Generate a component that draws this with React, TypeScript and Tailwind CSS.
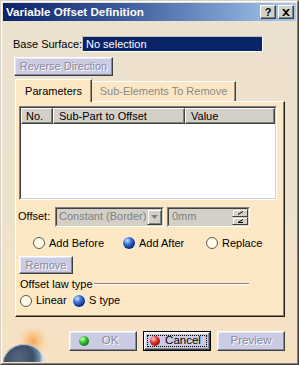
import React from "react";

const btn =
  "flex items-center justify-center bg-[#cbcbe3] border border-t-white border-l-white border-r-[#404040] border-b-[#404040] shadow-[inset_-1px_-1px_0_#8888a0,inset_1px_1px_0_#e6e6f6]";
const disabledText = "text-[#8a8a9e] [text-shadow:1px_1px_0_#ffffff]";

function Radio({ checked, label }: { checked?: boolean; label: string }) {
  return (
    <div className="flex items-center">
      {checked ? (
        <div className="w-[12px] h-[12px] rounded-full bg-[radial-gradient(circle_at_35%_30%,#c8e0ff_0%,#3a70d8_35%,#0c2478_75%,#061040_100%)] shadow-[0_0_0_1px_#f8efe0]" />
      ) : (
        <div className="w-[12px] h-[12px] rounded-full bg-[#fffbe4] border border-[#5a5a5a]" />
      )}
      <span className="ml-[4px] leading-none whitespace-nowrap">{label}</span>
    </div>
  );
}

export default function App() {
  return (
    <div className="w-[299px] h-[365px] overflow-hidden border border-t-[#d4d0c8] border-l-[#d4d0c8] border-r-[#404040] border-b-[#404040] font-['Liberation_Sans',Arial,sans-serif] text-[11px] text-black">
      <div className="w-full h-full border border-t-white border-l-white border-r-[#808080] border-b-[#808080] p-px flex flex-col bg-[linear-gradient(180deg,#ece1cf_0%,#efe2cc_60%,#f7e2c2_100%)]">
        {/* Title bar */}
        <div className="h-[18px] shrink-0 flex items-center bg-[linear-gradient(90deg,#0a246a_0%,#3a5a9a_40%,#a6caf0_100%)] pl-[3px] pr-[2px]">
          <span className="text-white font-bold text-[11.6px] leading-none whitespace-nowrap">Variable Offset Definition</span>
          <div className="ml-auto flex gap-[2px]">
            <div className="w-[16px] h-[14px] bg-[#d4d0c8] border border-t-white border-l-white border-r-[#404040] border-b-[#404040] shadow-[inset_-1px_-1px_0_#808080] flex items-center justify-center font-bold text-[11px] leading-none">?</div>
            <div className="w-[16px] h-[14px] bg-[#d4d0c8] border border-t-white border-l-white border-r-[#404040] border-b-[#404040] shadow-[inset_-1px_-1px_0_#808080] flex items-center justify-center">
              <svg width="8" height="7" viewBox="0 0 8 7">
                <path d="M0 0h2l2 2 2-2h2L5 3.5 8 7H6L4 5 2 7H0l3-3.5z" fill="#000" />
              </svg>
            </div>
          </div>
        </div>

        {/* Body */}
        <div className="flex-1 relative flex flex-col pl-[10px]">
          {/* globe */}
          <svg className="absolute left-0 bottom-0 pointer-events-none" width="70" height="34" viewBox="0 0 70 34">
            <defs>
              <radialGradient id="glow" cx="30" cy="13" r="18" gradientUnits="userSpaceOnUse">
                <stop offset="0" stopColor="#f7a24a" stopOpacity="0.95" />
                <stop offset="0.45" stopColor="#fac07c" stopOpacity="0.6" />
                <stop offset="1" stopColor="#f7e2c2" stopOpacity="0" />
              </radialGradient>
              <radialGradient id="globe" cx="16" cy="30" r="24" gradientUnits="userSpaceOnUse">
                <stop offset="0" stopColor="#56667e" />
                <stop offset="0.6" stopColor="#3e4e68" />
                <stop offset="0.85" stopColor="#6c8aa6" />
                <stop offset="1" stopColor="#cfe0ee" />
              </radialGradient>
            </defs>
            <rect x="0" y="0" width="70" height="34" fill="url(#glow)" />
            <circle cx="21" cy="38" r="22" fill="url(#globe)" />
            <circle cx="21" cy="38" r="21.5" fill="none" stroke="#dce9f4" strokeWidth="1" opacity="0.8" />
          </svg>

          {/* Base surface row */}
          <div className="mt-[15px] h-[16px] flex items-center">
            <span className="w-[69px] shrink-0 leading-none whitespace-nowrap">Base Surface:</span>
            <div className="w-[181px] shrink-0 h-[16px] bg-[#0a246a] border border-t-[#c0c0c0] border-l-[#c0c0c0] border-r-white border-b-white flex items-center pl-[3px] text-white leading-none">
              No selection
            </div>
          </div>

          {/* Reverse Direction */}
          <div className={`${btn} mt-[5px] ml-[1px] w-[99px] h-[19px]`}>
            <span className={`${disabledText} leading-none whitespace-nowrap`}>Reverse Direction</span>
          </div>

          {/* Tabs */}
          <div className="mt-[2px] ml-[2px] flex items-end h-[23px]">
            <div className="w-[77px] h-[23px] bg-[#fde8c6] border-t border-l border-t-white border-l-white border-r border-r-[#404040] shadow-[inset_-1px_0_0_#a09080] flex items-center justify-center leading-none relative z-10 -mb-px">
              Parameters
            </div>
            <div className="w-[144px] h-[20px] bg-[#fbe6c6] border-t border-t-white border-r border-r-[#404040] shadow-[inset_-1px_0_0_#a09080] flex items-center justify-center leading-none text-[#8a8a8a] whitespace-nowrap">
              Sub-Elements To Remove
            </div>
          </div>

          {/* Panel */}
          <div className="ml-[2px] w-[270px] h-[216px] bg-[#fde8c6] border border-t-white border-l-white border-r-[#202020] border-b-[#202020] shadow-[inset_-1px_-1px_0_#908070] flex flex-col">
            {/* table */}
            <div className="mt-[4px] ml-[3px] w-[258px] h-[94px] bg-white border border-t-[#808080] border-l-[#808080] border-r-white border-b-white">
              <div className="w-full h-full border border-t-[#404040] border-l-[#404040] border-r-[#d4d0c8] border-b-[#d4d0c8] flex flex-col">
                <div className="h-[16px] flex bg-[#d4d0c8] leading-none">
                  <div className="w-[32px] h-full border border-t-white border-l-white border-r-[#404040] border-b-[#404040] shadow-[inset_-1px_-1px_0_#808080] flex items-center pl-[4px]">No.</div>
                  <div className="w-[132px] h-full border border-t-white border-l-white border-r-[#404040] border-b-[#404040] shadow-[inset_-1px_-1px_0_#808080] flex items-center pl-[5px] whitespace-nowrap">Sub-Part to Offset</div>
                  <div className="flex-1 h-full border border-t-white border-l-white border-r-[#404040] border-b-[#404040] shadow-[inset_-1px_-1px_0_#808080] flex items-center pl-[5px]">Value</div>
                </div>
              </div>
            </div>

            {/* Offset row */}
            <div className="mt-[7px] ml-[2px] h-[19px] flex items-center">
              <span className="w-[37px] shrink-0 leading-none">Offset:</span>
              <div className="w-[109px] shrink-0 h-[20px] bg-[#d4d0c8] border border-t-[#808080] border-l-[#808080] border-r-white border-b-white">
                <div className="w-full h-full border border-t-[#404040] border-l-[#404040] border-r-[#d4d0c8] border-b-[#d4d0c8] flex items-center">
                  <span className="pl-[2px] leading-none text-[#808080] flex-1 whitespace-nowrap">Constant (Border)</span>
                  <div className="w-[15px] h-[16px] border border-t-[#d4d0c8] border-l-[#d4d0c8] border-r-[#404040] border-b-[#404040] shadow-[inset_1px_1px_0_#fff,inset_-1px_-1px_0_#808080] flex items-center justify-center">
                    <svg width="7" height="4" viewBox="0 0 7 4"><path d="M0 0h7L3.5 4z" fill="#808080" /></svg>
                  </div>
                </div>
              </div>
              <div className="ml-[3px] w-[83px] shrink-0 h-[20px] bg-[#d4d0c8] border border-t-[#808080] border-l-[#808080] border-r-white border-b-white">
                <div className="w-full h-full border border-t-[#404040] border-l-[#404040] border-r-[#d4d0c8] border-b-[#d4d0c8] flex items-center">
                  <span className="pl-[3px] leading-none text-[#808080] flex-1">0mm</span>
                  <div className="w-[16px] h-full flex flex-col">
                    <div className="flex-1 border border-t-[#d4d0c8] border-l-[#d4d0c8] border-r-[#404040] border-b-[#404040] shadow-[inset_1px_1px_0_#fff] flex items-center justify-center">
                      <svg width="7" height="4" viewBox="0 0 7 4"><path d="M1 3.5L6 0.5" stroke="#000" strokeWidth="1" /></svg>
                    </div>
                    <div className="flex-1 border border-t-[#d4d0c8] border-l-[#d4d0c8] border-r-[#404040] border-b-[#404040] shadow-[inset_1px_1px_0_#fff] flex items-center justify-center">
                      <svg width="7" height="4" viewBox="0 0 7 4"><path d="M1 3.5L6 0.5M1 3.5h5" stroke="#000" strokeWidth="1" /></svg>
                    </div>
                  </div>
                </div>
              </div>
            </div>

            {/* Radios */}
            <div className="mt-[11px] h-[12px] flex items-center">
              <div className="ml-[17px] w-[90px]"><Radio label="Add Before" /></div>
              <div className="w-[83px]"><Radio checked label="Add After" /></div>
              <div><Radio label="Replace" /></div>
            </div>

            {/* Remove */}
            <div className={`${btn} mt-[7px] ml-[3px] w-[54px] h-[18px]`}>
              <span className={`${disabledText} leading-none`}>Remove</span>
            </div>

            {/* Offset law type */}
            <div className="mt-[3px] ml-[4px] h-[14px] flex items-center">
              <span className="leading-none whitespace-nowrap">Offset law type</span>
              <div className="ml-[1px] w-[155px] h-[2px] border-t border-t-[#808080] border-b border-b-white" />
            </div>

            <div className="mt-[3px] ml-[4px] h-[13px] flex items-center">
              <div className="w-[53px]"><Radio label="Linear" /></div>
              <Radio checked label="S type" />
            </div>
          </div>

          {/* Bottom buttons */}
          <div className="mt-[14px] ml-[56px] flex h-[20px] gap-[6px] relative">
            <div className={`${btn} w-[68px] h-[20px] relative`}>
              <div className="absolute left-[9px] top-[4px] w-[10px] h-[10px] rounded-full bg-[radial-gradient(circle_at_35%_30%,#d0ffd0_0%,#30c030_40%,#0a7010_80%,#054008_100%)]" />
              <span className={`${disabledText} leading-none text-[11.5px] ml-[14px]`}>OK</span>
            </div>
            <div className="w-[68px] h-[20px] border border-black">
              <div className={`${btn} w-full h-full relative`}>
                <div className="absolute inset-[2px] border border-dotted border-black" />
                <div className="absolute left-[5px] top-[3px] w-[10px] h-[10px] rounded-full bg-[radial-gradient(circle_at_35%_30%,#ffd0d0_0%,#e03030_40%,#901010_80%,#500505_100%)]" />
                <span className="leading-none text-[11.5px] ml-[12px]">Cancel</span>
              </div>
            </div>
            <div className={`${btn} w-[68px] h-[20px]`}>
              <span className={`${disabledText} leading-none text-[11.5px]`}>Preview</span>
            </div>
          </div>
        </div>
      </div>
    </div>
  );
}
